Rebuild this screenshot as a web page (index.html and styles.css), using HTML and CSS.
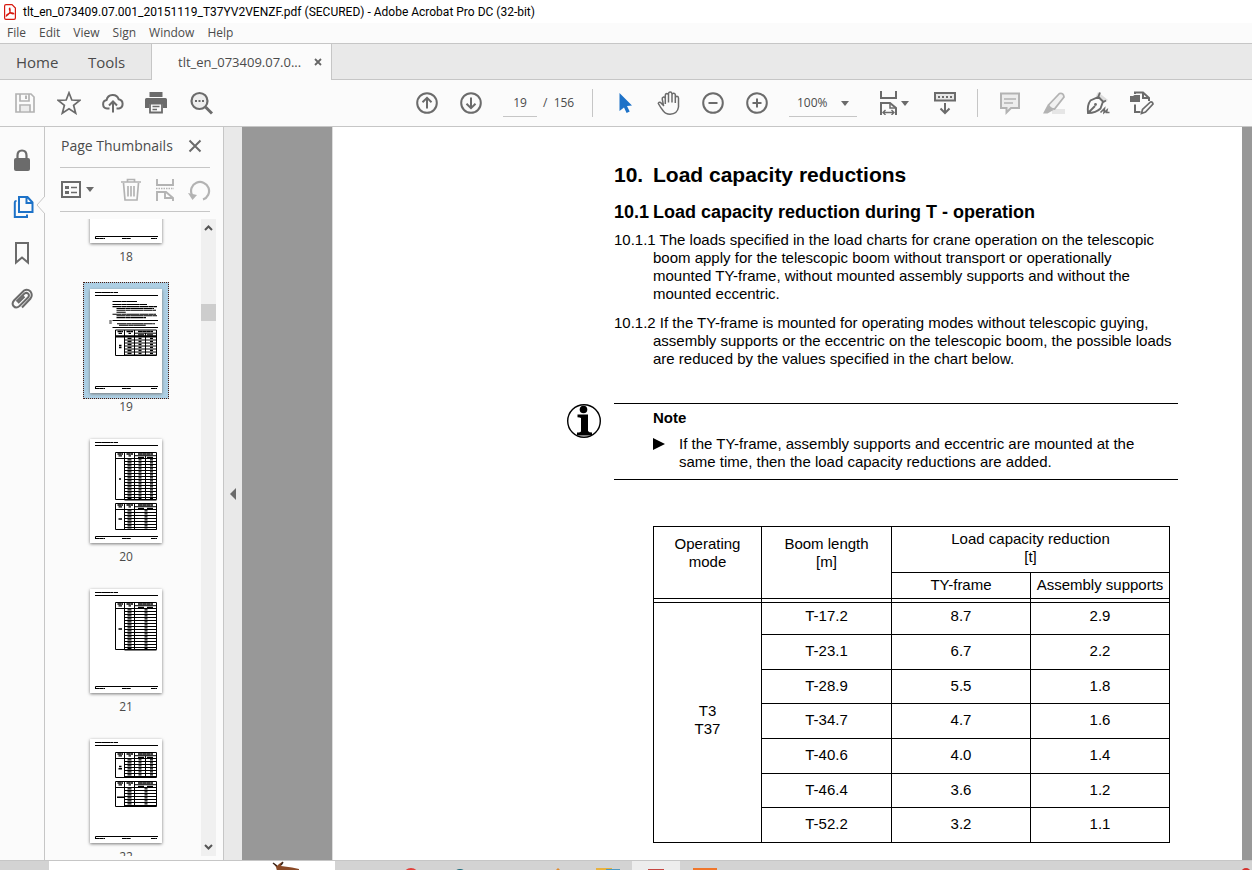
FILE: index.html
```html
<!DOCTYPE html>
<html lang="en">
<head>
<meta charset="utf-8">
<title>tlt_en_073409.07.001_20151119_T37YV2VENZF.pdf</title>
<link rel="stylesheet" href="styles.css">
</head>
<body>
<svg class="defs" aria-hidden="true">
  <defs>
    <g id="sheet">
      <path d="M5 3.500H28" stroke-width="1.200" stroke-dasharray="6 .2 9 .2 3 .5"/>
      <path d="M5 6.500H68M5.500 100V97.500H68" stroke-width="1"/>
      <path d="M5 99.500H15M32 99.500H41M61 99.500H67" stroke-width="1" stroke-dasharray="4 .2"/>
    </g>
    <g id="head">
      <path d="M25.500 0H66.500M25.500 6H66.500M44.500 3.200H66.500" stroke-width="1"/>
      <path d="M27.500 1.500H33M36.500 1.500H43M48 1.500H63" stroke-width="1.300" stroke-dasharray="4 .2"/>
      <path d="M28.500 3.400H32M38.500 3.400H41" stroke-width="1.200"/>
      <path d="M48 4.800H64" stroke-width="1.200" stroke-dasharray="6 3"/>
    </g>
    <g id="row3"><path d="M34.500 3H66.500" stroke-width="1"/><path d="M37.500 1.400H41.500M48.500 1.400H51.500M60 1.400H63" stroke-width="1.200"/></g>
    <g id="row2"><path d="M34.500 3H66.500" stroke-width="1"/><path d="M37.500 1.400H41.500M54.500 1.400H57.500" stroke-width="1.200"/></g>
    <g id="seven3"><use href="#row3"/><use href="#row3" y="3"/><use href="#row3" y="6"/><use href="#row3" y="9"/><use href="#row3" y="12"/><use href="#row3" y="15"/></g>
    <g id="seven2"><use href="#row2"/><use href="#row2" y="3"/><use href="#row2" y="6"/><use href="#row2" y="9"/><use href="#row2" y="12"/><use href="#row2" y="15"/></g>
  </defs>
</svg>

<header class="titlebar">
  <svg class="app-icon" width="12" height="16" viewBox="0 0 12 16"><path d="M.6 2Q.6.600 2 .600H8L11.400 4V14Q11.400 15.400 10 15.400H2Q.6 15.400.6 14Z" fill="#fff" stroke="#d7190f" stroke-width="1.200"/><path d="M2.300 12Q7.500 8.500 5.800 4.200Q4.800 4.300 6 7.400Q7.500 10.500 9.800 9.800Q9 8.200 5.200 9.300Q2.200 10.600 2.300 12Z" fill="none" stroke="#d7190f" stroke-width="1.200"/></svg>
  <h1 class="title">tlt_en_073409.07.001_20151119_T37YV2VENZF.pdf (SECURED) - Adobe Acrobat Pro DC (32-bit)</h1>
</header>
<nav class="menubar" aria-label="Menu">
  <button>File</button><button>Edit</button><button>View</button><button>Sign</button><button>Window</button><button>Help</button>
</nav>
<div class="tabs">
  <button class="tab home">Home</button><button class="tab tools">Tools</button>
  <div class="doc-tab"><button class="tab-name">tlt_en_073409.07.0...</button><button class="tab-close" aria-label="Close tab"><svg width="8" height="8" viewBox="0 0 8 8"><path d="M1 1L7 7M7 1L1 7" stroke="#666" stroke-width="1.800"/></svg></button></div>
</div>

<div class="toolbar" role="toolbar" aria-label="Main tools">
  <div class="group">
    <button class="icon pale" aria-label="Save"><svg viewBox="0 0 24 24"><path d="M3 3H18L21 6V21H3Z M7 3V10H16V3 M7 21V14H17V21" fill="none" stroke="currentColor" stroke-width="1.700"/><path d="M12 4.500H14V8H12Z" fill="currentColor"/><path d="M8 15H16V20H8Z" fill="#ececec"/></svg></button>
    <button class="icon" aria-label="Star"><svg viewBox="0 0 24 24"><path d="M12 1.800L14.800 9L22.800 9.400L16.600 14.300L18.700 22.200L12 17.800L5.300 22.200L7.400 14.300L1.200 9.400L9.200 9Z" fill="none" stroke="currentColor" stroke-width="1.700"/></svg></button>
    <button class="icon" aria-label="Upload"><svg viewBox="0 0 24 24"><path d="M8.500 17.500H6A4.300 4.300 0 0 1 5.600 9A6.300 6.300 0 0 1 17.700 8.300A4.700 4.700 0 0 1 18 17.500H15.500M12 21.500V10.500M8 14.500L12 10.500L16 14.500" fill="none" stroke="currentColor" stroke-width="2"/></svg></button>
    <button class="icon" aria-label="Print"><svg viewBox="0 0 24 24"><path d="M4.500 1H17.500V6H4.500Z" fill="currentColor"/><path d="M1.500 7H20.500Q22 7 22 8.500V17H18V13H4V17H0V8.500Q0 7 1.500 7Z" fill="currentColor"/><path d="M5 12.500H17V21.500H5Z" fill="#fbfbfb" stroke="currentColor" stroke-width="1.800"/><path d="M7.500 15.500H14.500M7.500 18.500H12" stroke="currentColor" stroke-width="1.300"/></svg></button>
    <button class="icon" aria-label="Find"><svg viewBox="0 0 24 24"><circle cx="10.500" cy="10" r="8" fill="#eee" stroke="currentColor" stroke-width="2.200"/><path d="M16.500 16L23 22.500" stroke="currentColor" stroke-width="3"/><path d="M6 9H8V11H6ZM9.500 9H11.500V11H9.500ZM13 9H15V11H13Z" fill="currentColor"/></svg></button>
  </div>
  <div class="group main-group">
    <button class="icon" aria-label="Previous page"><svg viewBox="0 0 24 24"><circle cx="12" cy="12" r="9.800" fill="none" stroke="currentColor" stroke-width="2"/><path d="M12 17.500V7M7.500 11.200L12 6.800L16.500 11.200" fill="none" stroke="currentColor" stroke-width="2"/></svg></button>
    <button class="icon" aria-label="Next page"><svg viewBox="0 0 24 24"><circle cx="12" cy="12" r="9.800" fill="none" stroke="currentColor" stroke-width="2"/><path d="M12 6.500V17M7.500 12.800L12 17.200L16.500 12.800" fill="none" stroke="currentColor" stroke-width="2"/></svg></button>
    <div class="pager"><input type="text" value="19" aria-label="Page number"><span>/&nbsp; 156</span></div>
    <span class="sep"></span>
    <button class="icon blue" aria-label="Select"><svg viewBox="0 0 24 24"><path d="M6.500 2L19 14.500L14 15L16.700 20.500L13.600 22L11 16.400L6.500 20Z" fill="currentColor"/></svg></button>
    <button class="icon" aria-label="Hand"><svg viewBox="0 0 24 24"><path d="M7 15L3.500 11.500Q1.500 10.800 1.300 12.500Q3.500 16.500 6.500 20.200Q8.500 23.200 13 23.200Q20.500 23 21.500 16V7Q21.300 5.300 19.800 5.300Q18.300 5.400 18.300 7V12M18.300 8V3.700Q18 2.200 16.500 2.300Q15 2.400 15 4V11.500M15 4V2.800Q14.700 1 13 1.100Q11.500 1.200 11.500 3V11.500M11.500 4Q11.300 2.500 9.800 2.500Q8.200 2.700 8.300 4.300V13M8.300 8Q8 5.700 6.600 5.900Q5 6.200 5.200 8L6.500 14.500" fill="none" stroke="currentColor" stroke-width="1.500"/></svg></button>
    <button class="icon" aria-label="Zoom out"><svg viewBox="0 0 24 24"><circle cx="12" cy="12" r="9.800" fill="none" stroke="currentColor" stroke-width="2"/><path d="M7.500 12H16.500" stroke="currentColor" stroke-width="2"/></svg></button>
    <button class="icon" aria-label="Zoom in"><svg viewBox="0 0 24 24"><circle cx="12" cy="12" r="9.800" fill="none" stroke="currentColor" stroke-width="2"/><path d="M7.500 12H16.500M12 7.500V16.500" stroke="currentColor" stroke-width="2"/></svg></button>
    <div class="zoom"><select aria-label="Zoom level"><option>100%</option></select><span class="caret"></span></div>
    <button class="icon wide" aria-label="Page fit"><svg viewBox="0 0 24 24"><path d="M4 0V7H19V0M4 24V12H13L19 17V24" fill="none" stroke="currentColor" stroke-width="2"/><path d="M13 12V17H19" fill="none" stroke="currentColor" stroke-width="1.500"/><path d="M6 21.500H17M8.500 19L6 21.500L8.500 24M14.500 19L17 21.500L14.500 24" fill="none" stroke="currentColor" stroke-width="1.400"/></svg><span class="caret"></span></button>
    <button class="icon" aria-label="Scrolling mode"><svg viewBox="0 0 24 24"><rect x="2" y="2" width="20" height="7.500" fill="#e7e7e7" stroke="currentColor" stroke-width="2"/><path d="M5 6H19" stroke="currentColor" stroke-width="2" stroke-dasharray="2 2"/><path d="M12 12V22M7.500 17.500L12 22L16.500 17.500" fill="none" stroke="currentColor" stroke-width="2"/></svg></button>
    <span class="sep"></span>
    <button class="icon pale" aria-label="Comment"><svg viewBox="0 0 24 24"><path d="M3 2.500H21V17H13L8.500 21.500V17H3Z" fill="#ededed" stroke="currentColor" stroke-width="2"/><path d="M6 8H18M6 12H15" stroke="currentColor" stroke-width="1.400"/></svg></button>
    <button class="icon pale" aria-label="Highlight"><svg viewBox="0 0 24 24"><path d="M10 18H23V23H10Z" fill="#e6e6e6"/><path d="M6.500 14L17.500 2.500Q21.500 1.500 22 6L12.500 18Q8 18 6.500 14Z" fill="#f1f1f1" stroke="currentColor" stroke-width="1.800"/><path d="M5.500 14L11.500 19L5.500 22.500H1Z" fill="currentColor"/></svg></button>
    <button class="icon" aria-label="Sign"><svg viewBox="0 0 24 24"><path d="M12 1L22 9L17 12L10 5Z" fill="#ddd"/><path d="M14 1.500L12 6.500M20 9.500L16.500 11.500M12.500 6L17 10.500L14.500 17.500Q10 22 2 22Q1 14 4.500 9.500ZM2.500 21.500L9 15" fill="none" stroke="currentColor" stroke-width="1.900"/><circle cx="9.500" cy="13.500" r="1.400" fill="currentColor"/><path d="M14.500 21.500L18.500 17.500L18 21.500L21 19L20.500 21.500H23.500" fill="none" stroke="currentColor" stroke-width="1.600"/></svg></button>
    <button class="icon" aria-label="Edit file"><svg viewBox="0 0 24 24"><path d="M0 5H3L4.500 4H10V11H0Z" fill="currentColor"/><path d="M5 3V1.500H13L19 7V10M5 13.500V21H10.500M13 1.500V7H19" fill="none" stroke="currentColor" stroke-width="2"/><path d="M11.500 22.500L12.500 18.500L20.500 11Q22.500 10.500 23 13L15.500 21Z" fill="#fbfbfb" stroke="currentColor" stroke-width="1.700"/></svg></button>
  </div>
</div>

<div class="workspace">
  <nav class="rail" aria-label="Panels">
    <button class="icon" aria-label="Security"><svg viewBox="0 0 24 24"><path d="M7.500 12V6.500Q7.500 1.500 12 1.500T16.500 6.500V12" fill="none" stroke="currentColor" stroke-width="2.200"/><rect x="4" y="9" width="16" height="13" rx="2" fill="currentColor"/></svg></button>
    <button class="icon blue active" aria-label="Page Thumbnails"><svg viewBox="0 0 24 24"><path d="M9 2H17.500L22.500 7.500V17H9ZM16.500 2V8H22" fill="#fbfbfb" stroke="currentColor" stroke-width="2"/><path d="M6.500 6H6Q4.800 6 4.800 7.500V22H17V19.500" fill="none" stroke="currentColor" stroke-width="2"/></svg></button>
    <button class="icon" aria-label="Bookmarks"><svg viewBox="0 0 24 24"><path d="M6 2H18V21.500L12 16.500L6 21.500Z" fill="none" stroke="currentColor" stroke-width="2"/></svg></button>
    <button class="icon" aria-label="Attachments"><svg viewBox="0 0 24 24"><path d="M6.500 14.500L14.500 6.500Q17 5 18.500 7Q19.500 9 18 10.500L9.500 19Q6 22 3.500 19Q1.500 16.500 4 13.500L14 3.500Q17.500 1.500 20.500 4.500Q23 8 20.500 11.500L12 20.500M14.500 9.500L8 16" fill="none" stroke="currentColor" stroke-width="2"/></svg></button>
    <svg class="notch" width="9" height="18" viewBox="0 0 9 18"><path d="M9 0L1 9L9 18" fill="#fbfbfb" stroke="#c6c6c6"/></svg>
  </nav>
  <aside class="panel">
    <div class="panel-top">
      <div class="panel-head"><h2>Page Thumbnails</h2><button class="icon small" aria-label="Close panel"><svg viewBox="0 0 14 14"><path d="M1.500 1.500L12.500 12.500M12.500 1.500L1.500 12.500" stroke="currentColor" stroke-width="2"/></svg></button></div>
      <div class="panel-tools">
        <button class="icon wide options" aria-label="Options"><svg viewBox="0 0 22 24"><rect x="2" y="4" width="18" height="15" fill="none" stroke="currentColor" stroke-width="2"/><path d="M5 8H9V11H5ZM5 13H9V16H5Z" fill="currentColor"/><path d="M11 9.500H17M11 14.500H17" stroke="currentColor" stroke-width="1.600"/></svg><span class="caret"></span></button>
        <span class="sep"></span>
        <button class="icon pale" aria-label="Delete"><svg viewBox="0 0 24 24"><path d="M2 4H22M8.500 4V1.500H15.500V4M4.500 5L6 22H18L19.500 5M9 8V18.500M12 8V18.500M15 8V18.500" fill="none" stroke="currentColor" stroke-width="1.700"/></svg></button>
        <button class="icon pale" aria-label="Split"><svg viewBox="0 0 24 24"><path d="M4 1V7H20V1M4 23V14H13L20 20V23M12 14V20H20" fill="none" stroke="currentColor" stroke-width="1.900"/><path d="M3 10.500H21" stroke="currentColor" stroke-width="1.500" stroke-dasharray="1.500 1"/></svg></button>
        <button class="icon pale" aria-label="Rotate"><svg viewBox="0 0 24 24"><path d="M5 17A9 9 0 1 1 16 21.500" fill="none" stroke="currentColor" stroke-width="2.200"/><path d="M1 15L10 17L5.500 22Z" fill="currentColor"/></svg></button>
      </div>
    </div>
    <div class="thumbs">
      <div class="thumb-list">
        <button class="thumb"><svg viewBox="0 0 72 104"><use href="#sheet"/></svg><span>18</span></button>
        <button class="thumb selected"><svg viewBox="0 0 72 104"><use href="#sheet"/>
          <path d="M22.500 12.500H47M22.500 15.500H57M22.500 17.600H67M26.500 19.500H64M26.500 21.300H66M26.500 23.300H36M22.500 25.200H66M26.500 26.800H67M26.500 28.600H56M27 34.800H65M29 36.300H56" stroke-width="1.100" stroke-dasharray="9 .3 5 .2 12 .3"/>
          <path d="M22.500 31.500H68M22.500 38.500H68" stroke-width="1"/><path d="M20.500 31V35" stroke="#888" stroke-width="2.500"/>
          <path d="M25.500 41V66.500M34.500 41V66.500M44.500 41V66.500M55.500 44V66.500M66.500 41V66.500M25.500 66.500H66.500"/><use href="#head" y="41"/><path d="M25.500 47.500H66.500" stroke-width="2"/><use href="#seven3" y="48"/><path d="M29 56.500H31.500M29 58.500H31.500" stroke-width="1.500"/></svg><span>19</span></button>
        <button class="thumb"><svg viewBox="0 0 72 104"><use href="#sheet"/>
          <path d="M25.500 13.500V60.500M34.500 13.500V60.500M44.500 13.500V60.500M55.500 17V60.500M66.500 13.500V60.500M25.500 60.500H66.500M25.500 64.500V90.500M34.500 64.500V90.500M44.500 64.500V90.500M66.500 64.500V90.500M25.500 90.500H66.500"/>
          <use href="#head" y="13.500"/><use href="#seven3" y="19.500"/><use href="#seven3" y="37.500"/><use href="#row3" y="55.500"/><use href="#row3" y="58"/>
          <use href="#head" y="64.500"/><use href="#seven2" y="70.500"/><use href="#row2" y="87.500"/><path d="M29 40H31M28.500 80H32" stroke-width="1.500"/></svg><span>20</span></button>
        <button class="thumb"><svg viewBox="0 0 72 104"><use href="#sheet"/>
          <path d="M25.500 13.500V60.500M34.500 13.500V60.500M44.500 13.500V60.500M66.500 13.500V60.500M25.500 60.500H66.500"/>
          <use href="#head" y="13.500"/><use href="#seven2" y="19.500"/><use href="#seven2" y="37.500"/><use href="#row2" y="55.500"/><use href="#row2" y="58"/><path d="M28.500 40H32" stroke-width="1.500"/></svg><span>21</span></button>
        <button class="thumb"><svg viewBox="0 0 72 104"><use href="#sheet"/>
          <path d="M25.500 13.500V38.500M34.500 13.500V38.500M44.500 13.500V38.500M55.500 17V38.500M66.500 13.500V38.500M25.500 38.500H66.500M25.500 42.500V67.500M34.500 42.500V67.500M44.500 42.500V67.500M66.500 42.500V67.500M25.500 67.500H66.500"/>
          <use href="#head" y="13.500"/><use href="#seven3" y="19.500"/><use href="#head" y="42.500"/><use href="#seven2" y="48.500"/><path d="M29 27.500H31.500M28.500 29.800H32M27 58.300H34" stroke-width="1.500"/></svg><span>22</span></button>
      </div>
      <div class="scrollbar"><button aria-label="Scroll up"><svg width="9" height="8" viewBox="0 0 9 8"><path d="M1 6L4.500 2.500L8 6" fill="none" stroke="#555" stroke-width="2"/></svg></button><span class="grip"></span><button class="down" aria-label="Scroll down"><svg width="9" height="8" viewBox="0 0 9 8"><path d="M1 2L4.500 5.500L8 2" fill="none" stroke="#555" stroke-width="2"/></svg></button></div>
    </div>
  </aside>
  <button class="splitter" aria-label="Collapse panel"><span></span></button>
  <main class="viewer">
    <article class="page">
      <h2><span class="num">10.</span>Load capacity reductions</h2>
      <h3><span class="num">10.1</span>Load capacity reduction during T - operation</h3>
      <p>10.1.1 The loads specified in the load charts for crane operation on the telescopic<br>boom apply for the telescopic boom without transport or operationally<br>mounted TY-frame, without mounted assembly supports and without the<br>mounted eccentric.</p>
      <p>10.1.2 If the TY-frame is mounted for operating modes without telescopic guying,<br>assembly supports or the eccentric on the telescopic boom, the possible loads<br>are reduced by the values specified in the chart below.</p>
      <section class="note-row">
        <svg class="info" width="36" height="36" viewBox="0 0 36 36"><circle cx="18" cy="18" r="16.300" fill="#fff" stroke="#000" stroke-width="1.400"/><circle cx="17.500" cy="6.500" r="3.800"/><path d="M11.500 11.500H22V28Q23 29.500 26 29.500V32.500H11V29.500Q15 29.500 15 28V15Q14 14.300 11.500 14.300Z"/></svg>
        <div class="note"><h4>Note</h4><div class="bullet"><span class="arrow"></span><div>If the TY-frame, assembly supports and eccentric are mounted at the<br>same time, then the load capacity reductions are added.</div></div></div>
      </section>
      <table>
        <colgroup><col class="c-mode"><col class="c-boom"><col class="c-ty"><col class="c-sup"></colgroup>
        <thead>
          <tr class="h1"><th rowspan="2" class="tall">Operating<br>mode</th><th rowspan="2" class="tall">Boom length<br>[m]</th><th colspan="2">Load capacity reduction<br>[t]</th></tr>
          <tr class="h2"><th>TY-frame</th><th>Assembly supports</th></tr>
          <tr class="rule"><td></td><td></td><td></td><td></td></tr>
        </thead>
        <tbody>
          <tr class="first"><td rowspan="7">T3<br>T37</td><td>T-17.2</td><td>8.7</td><td>2.9</td></tr>
          <tr><td>T-23.1</td><td>6.7</td><td>2.2</td></tr>
          <tr><td>T-28.9</td><td>5.5</td><td>1.8</td></tr>
          <tr><td>T-34.7</td><td>4.7</td><td>1.6</td></tr>
          <tr><td>T-40.6</td><td>4.0</td><td>1.4</td></tr>
          <tr><td>T-46.4</td><td>3.6</td><td>1.2</td></tr>
          <tr><td>T-52.2</td><td>3.2</td><td>1.1</td></tr>
        </tbody>
      </table>
    </article>
  </main>
</div>

<footer class="taskbar">
  <div class="search"><svg width="28" height="10" viewBox="0 0 28 10"><path d="M1 2L5 5L7 3L10 1L9 5L20 6.500L27 8V10H5L4 6Z" fill="#8a4a27"/><path d="M1 2L5 5M11 1L9 4" stroke="#3b2418" stroke-width="1.500"/></svg></div>
  <svg class="apps" width="400" height="10" viewBox="0 1 400 10"><circle cx="76" cy="16" r="8" fill="#e2403a"/><circle cx="125" cy="16" r="7" fill="#17697a"/><path d="M221 10L223 8L225 10Z" fill="#e08a2c"/><path d="M261 8H277V10H261Z" fill="#e8b23f"/><path d="M271 9H285V10H271Z" fill="#4d9ac0"/><path d="M297 0H345V11H297Z" fill="#ededed"/><path d="M313 9H329V11H313Z" fill="#c64742"/><path d="M358 8H382V11H358Z" fill="#f0762b"/></svg>
  <svg class="alert" width="12" height="10" viewBox="0 1 12 10"><circle cx="6" cy="13" r="5" fill="#d4322d"/></svg>
</footer>
</body>
</html>
```
FILE: styles.css
```css
* { box-sizing: border-box; }
html, body { height: 100%; }
body {
  margin: 0;
  display: flex;
  flex-direction: column;
  overflow: hidden;
  background: #fbfbfb;
  color: #4b4b4b;
  font: 12px/16px "Open Sans", "Noto Sans", sans-serif;
}
h1, h2, h3, h4, p { margin: 0; font-weight: 400; }
button, input, select { font: inherit; color: inherit; border: 0; background: none; padding: 0; margin: 0; border-radius: 0; }
svg { display: block; }
.defs { position: absolute; width: 0; height: 0; }

.titlebar { display: flex; align-items: center; gap: 7px; height: 23px; padding-left: 4px; background: #fff; }
.title { font-family: Roboto, "Open Sans", sans-serif; font-size: 12px; color: #000; white-space: nowrap; }
.menubar { display: flex; gap: 13px; height: 20px; padding-left: 7px; }

.tabs { display: flex; flex: none; height: 37px; background: #e9e9e9; border: solid #c6c6c6; border-width: 1px 0; }
.tab { font-size: 15px; text-align: left; padding-left: 16px; }
.home { width: 72px; }
.tools { width: 79px; }
.doc-tab { display: flex; align-items: center; justify-content: space-between; width: 181px; height: 36px; margin-bottom: -1px; padding: 0 9px 0 26px; background: #fbfbfb; border: solid #c6c6c6; border-width: 0 1px; }
.tab-name { font-size: 13px; }

.toolbar { display: flex; flex: none; align-items: center; height: 47px; padding-left: 13px; border-bottom: 1px solid #c6c6c6; }
.group { display: flex; align-items: center; gap: 20px; }
.main-group { margin-left: 202px; }
.icon { flex: none; display: flex; align-items: center; width: 24px; height: 24px; color: #6b6b6b; }
.icon svg { width: 24px; height: 24px; flex: none; }
.wide { width: 36px; }
.pale { color: #b3b3b3; }
.blue { color: #1d72c8; }
.small { width: 14px; height: 14px; }
.small svg { width: 14px; height: 14px; }
.caret { border: 4px solid transparent; border-top: 5px solid #6b6b6b; border-bottom: 0; }
.sep { width: 1px; height: 28px; background: #c6c6c6; }
.pager { display: flex; align-items: center; gap: 6px; width: 69px; white-space: nowrap; }
.pager input { flex: none; width: 34px; height: 28px; text-align: center; border-bottom: 1px solid #c6c6c6; }
.zoom { position: relative; width: 68px; border-bottom: 1px solid #c6c6c6; }
.zoom select { appearance: none; width: 100%; height: 27px; padding-left: 8px; }
.zoom .caret { position: absolute; right: 8px; top: 12px; pointer-events: none; }

.workspace { display: flex; flex: 1; min-height: 0; border-bottom: 1px solid #c6c6c6; }
.rail { position: relative; flex: none; display: flex; flex-direction: column; gap: 22px; width: 45px; padding: 22px 0 0 10px; border-right: 1px solid #c6c6c6; }
.notch { position: absolute; right: -1px; top: 69px; }
.panel { flex: none; display: flex; flex-direction: column; width: 179px; padding-bottom: 4px; border-right: 1px solid #c6c6c6; }
.panel-top { margin: 0 13px 0 15px; }
.panel-head { display: flex; align-items: center; justify-content: space-between; height: 41px; padding: 0 8px 2px 1px; border-bottom: 1px solid #c6c6c6; }
.panel-head h2 { font-size: 14px; white-space: nowrap; }
.panel-tools { display: flex; align-items: center; gap: 10px; height: 44px; border-bottom: 1px solid #c6c6c6; }
.options { width: 33px; gap: 4px; }
.options svg { width: 22px; }
.panel-tools .sep { margin-right: 6px; }
.thumbs { flex: 1; min-height: 0; display: flex; margin-top: 7px; overflow: hidden; }
.thumb-list { flex: 1; min-width: 0; padding-left: 38px; margin-top: -87px; height: 724px; overflow: hidden; }
.thumb { display: flex; flex-direction: column; align-items: center; width: 86px; height: 150px; padding-top: 7px; }
.thumb svg { width: 72px; height: 104px; background: #fff; fill: none; stroke: #000; box-shadow: 0 1px 3px #777; }
.thumb span { margin-top: 6px; }
.selected { background: linear-gradient(#adcfe4, #adcfe4) no-repeat 0 0 / 86px 117px; position: relative; }
.selected::before { content: ""; position: absolute; inset: 0 0 33px; border: 1px dotted #4a1c10; }
.scrollbar { flex: none; display: flex; flex-direction: column; align-items: center; width: 15px; margin-right: 7px; background: #f0f0f0; }
.scrollbar button { display: flex; align-items: center; height: 18px; }
.grip { width: 15px; height: 17px; margin-top: 67px; background: #cdcdcd; }
.scrollbar .down { margin-top: auto; }
.splitter { flex: none; width: 18px; padding-left: 6px; background: #e9e9e9; }
.splitter span { display: block; width: 0; border: 6px solid transparent; border-left: 0; border-right-color: #6b6b6b; }

.viewer { flex: 1; min-width: 0; padding: 0 10px 0 90px; background: #989898; overflow: hidden; }
.page { min-height: 100%; padding: 35px 64px 0 281px; border-left: 1px solid #ddd; background: #fff; color: #000; font: 15px/18px "Liberation Sans", Arial, sans-serif; white-space: nowrap; }
.page h2 { display: flex; font-size: 21px; line-height: 26px; font-weight: 700; }
.page h3 { display: flex; margin-top: 12px; font-size: 18px; line-height: 24px; font-weight: 700; }
.num { flex: none; width: 39px; }
.page p { padding-left: 39px; text-indent: -39px; margin: 7px 0 11px; }
.page p + p { margin: 0; }
.note-row { display: flex; align-items: flex-start; margin: 35px 0 46px -48px; }
.note { flex: 1; margin-left: 12px; padding: 5px 0 8px 39px; border: solid #000; border-width: 1px 0; }
.note h4 { font-weight: 700; }
.bullet { display: flex; margin-top: 8px; }
.arrow { width: 26px; height: 12px; margin-top: 3px; background: #000; clip-path: polygon(0 0, 12px 50%, 0 100%); }
table { width: 516px; margin-left: 39px; border-collapse: collapse; table-layout: fixed; }
.c-mode { width: 108px; }
.c-boom { width: 130px; }
.c-ty { width: 139px; }
.c-sup { width: 139px; }
th, td { border: 1px solid #000; padding: 0; font-weight: 400; text-align: center; }
.h1 { height: 46px; }
.h1 th { padding-bottom: 4px; }
.h2 { height: 26px; }
.h2 th { padding-bottom: 2px; }
.h1 .tall { vertical-align: top; padding-top: 8px; }
.rule { height: 4px; }
tbody tr { height: 35px; }
tbody tr:nth-child(3n) { height: 34px; }
tbody .first { height: 32px; }
tbody td { padding-bottom: 2px; }
tbody .first td { padding-bottom: 5px; }

.taskbar { flex: none; display: flex; height: 9px; padding-left: 49px; background: #d3d3d3; overflow: hidden; }
.search { width: 286px; padding-left: 223px; background: #fff; }
.alert { margin-left: auto; }
```
